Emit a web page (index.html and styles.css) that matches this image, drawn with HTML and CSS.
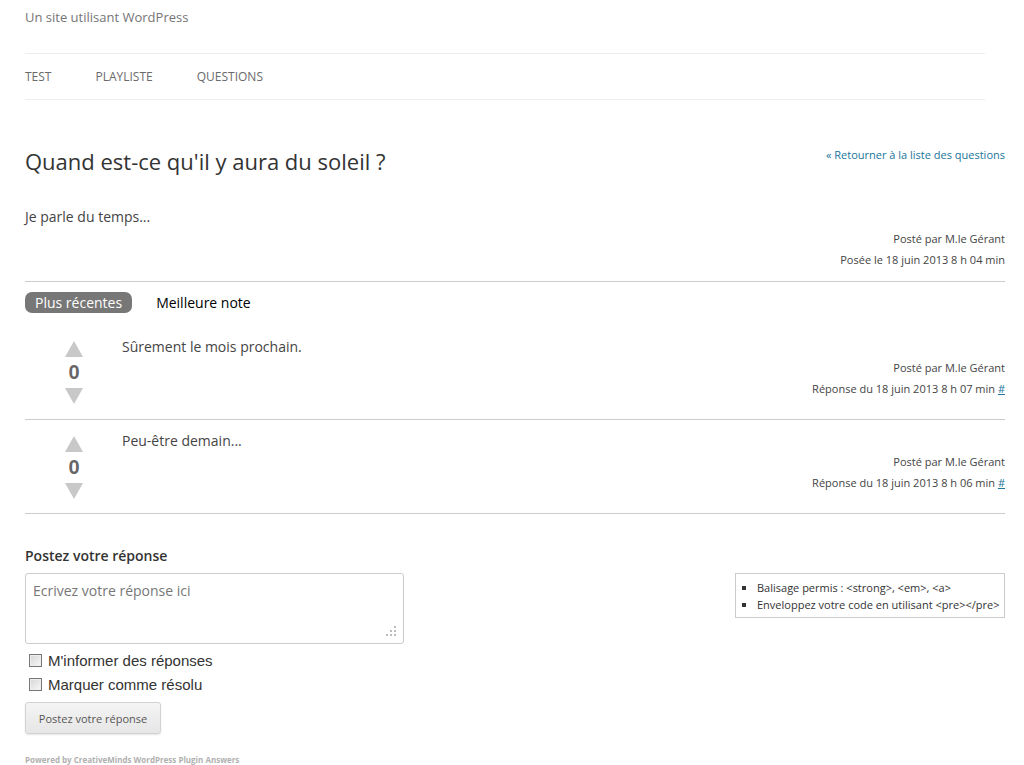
FILE: index.html
```html
<!DOCTYPE html>
<html lang="fr">
<head>
    <meta charset="UTF-8">
    <title>Quand est-ce qu'il y aura du soleil ?</title>
    <link rel="stylesheet" href="styles.css">
</head>
<body>
    <header class="site-header">
        <p class="site-desc">Un site utilisant WordPress</p>
        <nav class="main-nav">
            <a href="#">TEST</a>
            <a href="#">PLAYLISTE</a>
            <a href="#">QUESTIONS</a>
        </nav>
    </header>

    <main class="question">
        <div class="question-top">
            <h1>Quand est-ce qu'il y aura du soleil ?</h1>
            <a class="back-link" href="#">« Retourner à la liste des questions</a>
        </div>
        <p class="question-body">Je parle du temps...</p>
        <div class="meta">
            <div>Posté par M.le Gérant</div>
            <div>Posée le 18 juin 2013 8 h 04 min</div>
        </div>

        <div class="tabs">
            <span class="tab active">Plus récentes</span>
            <span class="tab">Meilleure note</span>
        </div>

        <div class="answer">
            <div class="votes">
                <span class="arrow up"></span>
                <span class="count">0</span>
                <span class="arrow down"></span>
            </div>
            <div class="answer-main">
                <p class="answer-text">Sûrement le mois prochain.</p>
                <div class="meta">
                    <div>Posté par M.le Gérant</div>
                    <div>Réponse du 18 juin 2013 8 h 07 min <a href="#">#</a></div>
                </div>
            </div>
        </div>

        <div class="answer">
            <div class="votes">
                <span class="arrow up"></span>
                <span class="count">0</span>
                <span class="arrow down"></span>
            </div>
            <div class="answer-main">
                <p class="answer-text">Peu-être demain...</p>
                <div class="meta">
                    <div>Posté par M.le Gérant</div>
                    <div>Réponse du 18 juin 2013 8 h 06 min <a href="#">#</a></div>
                </div>
            </div>
        </div>

        <form class="reply">
            <h3>Postez votre réponse</h3>
            <div class="reply-row">
                <div class="reply-left">
                    <textarea placeholder="Ecrivez votre réponse ici"></textarea>
                    <label class="check"><input type="checkbox"> M'informer des réponses</label>
                    <label class="check"><input type="checkbox"> Marquer comme résolu</label>
                    <button type="button">Postez votre réponse</button>
                </div>
                <ul class="hints">
                    <li>Balisage permis : &lt;strong&gt;, &lt;em&gt;, &lt;a&gt;</li>
                    <li>Enveloppez votre code en utilisant &lt;pre&gt;&lt;/pre&gt;</li>
                </ul>
            </div>
        </form>

        <p class="powered">Powered by CreativeMinds WordPress Plugin Answers</p>
    </main>
</body>
</html>
```

FILE: styles.css
```css
body {
    margin: 0;
    padding: 0 19px 0 25px;
    font-family: "Open Sans", sans-serif;
    color: #444;
    background: #fff;
}

.site-header {
    margin-right: 20px;
}

.site-desc {
    margin: 0;
    padding-top: 8px;
    height: 54px;
    box-sizing: border-box;
    font-size: 13px;
    color: #757575;
    border-bottom: 1px solid #ededed;
}

.main-nav {
    display: flex;
    gap: 44px;
    height: 45px;
    align-items: center;
    border-bottom: 1px solid #ededed;
}

.main-nav a {
    font-size: 12px;
    color: #6a6a6a;
    text-decoration: none;
}

.question-top {
    display: flex;
    justify-content: space-between;
    align-items: flex-start;
    margin-top: 43px;
}

h1 {
    margin: 0;
    font-size: 22px;
    font-weight: 400;
    color: #333;
    line-height: 36px;
}

.back-link {
    font-size: 11px;
    color: #21759b;
    text-decoration: none;
    margin-top: 4px;
}

.question-body {
    margin: 29px 0 0;
    font-size: 14px;
    line-height: 18px;
    color: #444;
}

.meta {
    text-align: right;
    font-size: 11px;
    line-height: 21px;
    color: #444;
}

.meta a {
    color: #21759b;
}

.question > .meta {
    margin-top: 2px;
    padding-bottom: 11px;
    border-bottom: 1px solid #ccc;
}

.tabs {
    display: flex;
    gap: 14px;
    margin-top: 10px;
    align-items: center;
}

.tab {
    font-size: 14px;
    color: #000;
    padding: 1px 10px;
    line-height: 19px;
    border-radius: 7px;
}

.tab.active {
    background: #777;
    color: #fff;
}

.answer {
    display: flex;
    border-bottom: 1px solid #ccc;
    padding: 24px 0 15px;
}

.answer .answer-main {
    padding-top: 1px;
}

.answer + .answer {
    padding-top: 12px;
    padding-bottom: 14px;
}

.answer + .answer .answer-main {
    padding-top: 0;
}

.votes {
    width: 97px;
    display: flex;
    flex-direction: column;
    align-items: flex-start;
    padding-left: 40px;
    box-sizing: border-box;
}

.arrow {
    width: 0;
    height: 0;
    border-left: 9px solid transparent;
    border-right: 9px solid transparent;
}

.arrow.up {
    border-bottom: 16px solid #c8c8c8;
    margin-top: 4px;
}

.arrow.down {
    border-top: 16px solid #c8c8c8;
}

.count {
    width: 18px;
    text-align: center;
    font-family: "Liberation Sans", Arial, sans-serif;
    font-weight: bold;
    font-size: 20px;
    line-height: 31px;
    color: #666;
}

.answer-main {
    flex: 1;
}

.answer-text {
    margin: 0 0 1px;
    font-size: 14px;
    line-height: 18px;
}

.reply {
    margin-top: 32px;
}

.reply h3 {
    margin: 0 0 8px;
    font-size: 14px;
    font-weight: 600;
    color: #333;
}

.reply-row {
    display: flex;
    justify-content: space-between;
    align-items: flex-start;
}

.reply-left {
    display: flex;
    flex-direction: column;
    align-items: flex-start;
    position: relative;
}

textarea {
    width: 379px;
    height: 71px;
    box-sizing: border-box;
    border: 1px solid #ccc;
    border-radius: 3px;
    padding: 7px 7px;
    font-family: "Open Sans", sans-serif;
    font-size: 14px;
    color: #444;
    margin: 0 0 4px;
    resize: none;
}

/* dotted resize grip */
.reply-left::before {
    content: "";
    position: absolute;
    left: 360px;
    top: 52px;
    width: 12px;
    height: 12px;
    background:
        radial-gradient(circle at 10px 2px, #bbb 1px, transparent 1.3px),
        radial-gradient(circle at 6px 6px, #bbb 1px, transparent 1.3px),
        radial-gradient(circle at 10px 6px, #bbb 1px, transparent 1.3px),
        radial-gradient(circle at 2px 10px, #bbb 1px, transparent 1.3px),
        radial-gradient(circle at 6px 10px, #bbb 1px, transparent 1.3px),
        radial-gradient(circle at 10px 10px, #bbb 1px, transparent 1.3px);
    pointer-events: none;
}

textarea::placeholder {
    color: #777;
}

.check {
    display: flex;
    align-items: center;
    font-family: "Liberation Sans", Arial, sans-serif;
    font-size: 15px;
    color: #333;
    height: 24px;
    gap: 6px;
}

.check input {
    appearance: none;
    margin: 0 0 0 4px;
    width: 13px;
    height: 13px;
    border: 1px solid #777;
    background: linear-gradient(135deg, #d6d6d6, #f8f8f8);
    box-shadow: inset 0 0 0 1px #eee;
}

button {
    margin-top: 6px;
    width: 136px;
    height: 32px;
    border: 1px solid #d2d2d2;
    border-radius: 3px;
    background: linear-gradient(#f4f4f4, #e6e6e6);
    box-shadow: 0 1px 2px rgba(0, 0, 0, 0.1);
    font-family: "Open Sans", sans-serif;
    font-size: 11px;
    color: #555;
}

.hints {
    list-style: square;
    margin: 0;
    padding: 5px 4px 4px 21px;
    border: 1px solid #ccc;
    width: 270px;
    box-sizing: border-box;
    font-size: 11px;
    line-height: 17px;
    color: #333;
    white-space: nowrap;
}

.powered {
    margin: 20px 0 0;
    font-size: 8px;
    font-weight: bold;
    color: #b0b0b0;
}
```
